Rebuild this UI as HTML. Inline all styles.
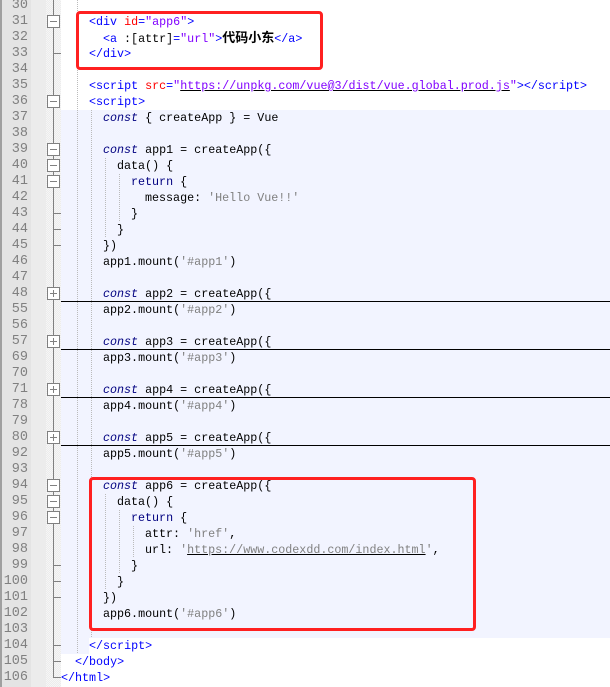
<!DOCTYPE html>
<html><head><meta charset="utf-8"><style>
body{margin:0;width:610px;height:687px;overflow:hidden;background:#fff;position:relative;font-family:"Liberation Mono","Courier New",monospace;font-size:11.7px}
.g0{position:absolute;left:0;top:0;width:2px;height:687px;background:#a0a0a0}
.g1{position:absolute;left:2px;top:0;width:29px;height:687px;background:#e4e4e4}
.g2{position:absolute;left:31px;top:0;width:15px;height:687px;background:#ececec}
.g3{position:absolute;left:46px;top:0;width:15px;height:687px;background-color:#f6f6f6;background-image:linear-gradient(45deg,#ececec 25%,transparent 25%,transparent 75%,#ececec 75%),linear-gradient(45deg,#ececec 25%,transparent 25%,transparent 75%,#ececec 75%);background-size:2px 2px;background-position:0 0,1px 1px}
.n{position:absolute;left:0;width:28px;text-align:right;color:#808080;height:16px;line-height:16px;font-size:13.5px;font-family:"Liberation Mono",monospace}
.r{position:absolute;height:16px;line-height:16px;white-space:pre;color:#000}
.vl{position:absolute;left:53px;top:0;width:1px;height:678px;background:#808080}
.fb{position:absolute;left:47px;width:13px;height:13px;border:1px solid #808080;background:#fff;box-sizing:border-box}
.fb:before{content:"";position:absolute;left:2px;top:5px;width:7px;height:1px;background:#808080}
.fb.p:after{content:"";position:absolute;left:5px;top:2px;width:1px;height:7px;background:#808080}
.tk{position:absolute;left:53px;width:8px;height:1px;background:#808080}
.hl{position:absolute;left:61px;width:549px;height:1px;background:#000}
.blue{position:absolute;background:#f2f4ff}
.t{color:#0000ff}.a{color:#ff0000}.v{color:#8000ff}.k{color:#000080;font-style:italic}.kb{color:#000080}.s{color:#808080}
.u{text-decoration:underline;text-decoration-color:#000}
.box{position:absolute;border:3px solid #ff2020;border-radius:4px;box-sizing:border-box}
.cj{font-family:"Liberation Sans","Noto Sans CJK SC",sans-serif;font-weight:bold;font-size:13px}
.dg{position:absolute;width:1px;background-image:linear-gradient(#bbb 50%,transparent 50%);background-size:1px 2px}
</style></head><body>
<div class="g0"></div><div class="g1"></div><div class="g2"></div><div class="g3"></div>
<div class="blue" style="left:61px;top:110px;width:549px;height:528px"></div>
<div class="blue" style="left:61px;top:638px;width:28px;height:16px"></div>
<div class="dg" style="left:77px;top:0;height:654px"></div>
<div class="dg" style="left:91px;top:110px;height:528px"></div>
<div class="dg" style="left:105px;top:158px;height:80px"></div>
<div class="dg" style="left:119px;top:174px;height:48px"></div>
<div class="dg" style="left:105px;top:494px;height:96px"></div>
<div class="dg" style="left:119px;top:510px;height:64px"></div>
<div class="dg" style="left:133px;top:526px;height:32px"></div>
<div class="vl"></div>
<div class="n" style="top:-2px">30</div><div class="n" style="top:14px">31</div><div class="n" style="top:30px">32</div><div class="n" style="top:46px">33</div><div class="n" style="top:62px">34</div><div class="n" style="top:78px">35</div><div class="n" style="top:94px">36</div><div class="n" style="top:110px">37</div><div class="n" style="top:126px">38</div><div class="n" style="top:142px">39</div><div class="n" style="top:158px">40</div><div class="n" style="top:174px">41</div><div class="n" style="top:190px">42</div><div class="n" style="top:206px">43</div><div class="n" style="top:222px">44</div><div class="n" style="top:238px">45</div><div class="n" style="top:254px">46</div><div class="n" style="top:270px">47</div><div class="n" style="top:286px">48</div><div class="n" style="top:302px">55</div><div class="n" style="top:318px">56</div><div class="n" style="top:334px">57</div><div class="n" style="top:350px">69</div><div class="n" style="top:366px">70</div><div class="n" style="top:382px">71</div><div class="n" style="top:398px">78</div><div class="n" style="top:414px">79</div><div class="n" style="top:430px">80</div><div class="n" style="top:446px">92</div><div class="n" style="top:462px">93</div><div class="n" style="top:478px">94</div><div class="n" style="top:494px">95</div><div class="n" style="top:510px">96</div><div class="n" style="top:526px">97</div><div class="n" style="top:542px">98</div><div class="n" style="top:558px">99</div><div class="n" style="top:574px">100</div><div class="n" style="top:590px">101</div><div class="n" style="top:606px">102</div><div class="n" style="top:622px">103</div><div class="n" style="top:638px">104</div><div class="n" style="top:654px">105</div><div class="n" style="top:670px">106</div>
<div class="fb" style="top:15px"></div><div class="fb" style="top:95px"></div><div class="fb" style="top:143px"></div><div class="fb" style="top:159px"></div><div class="fb" style="top:175px"></div>
<div class="fb p" style="top:287px"></div><div class="fb p" style="top:335px"></div><div class="fb p" style="top:383px"></div><div class="fb p" style="top:431px"></div>
<div class="fb" style="top:479px"></div><div class="fb" style="top:495px"></div><div class="fb" style="top:511px"></div>
<div class="tk" style="top:53px"></div><div class="tk" style="top:213px"></div><div class="tk" style="top:229px"></div><div class="tk" style="top:245px"></div><div class="tk" style="top:565px"></div><div class="tk" style="top:581px"></div><div class="tk" style="top:597px"></div><div class="tk" style="top:645px"></div><div class="tk" style="top:661px"></div><div class="tk" style="top:677px"></div>
<div class="hl" style="top:301px"></div><div class="hl" style="top:349px"></div><div class="hl" style="top:397px"></div><div class="hl" style="top:445px"></div>
<div class="r" style="left:89px;top:14px"><span class="t">&lt;div </span><span class="a">id</span><span class="t">=</span><span class="v">"app6"</span><span class="t">&gt;</span></div>
<div class="r" style="left:103px;top:30px"><span class="t">&lt;a </span>:[attr]<span class="t">=</span><span class="v">"url"</span><span class="t">&gt;</span><span class="cj">代码小东</span><span class="t">&lt;/a&gt;</span></div>
<div class="r" style="left:89px;top:46px"><span class="t">&lt;/div&gt;</span></div>
<div class="r" style="left:89px;top:78px"><span class="t">&lt;script </span><span class="a">src</span><span class="t">=</span><span class="v">"<span class="u">https://unpkg.com/vue@3/dist/vue.global.prod.js</span>"</span><span class="t">&gt;&lt;/script&gt;</span></div>
<div class="r" style="left:89px;top:94px"><span class="t">&lt;script&gt;</span></div>
<div class="r" style="left:103px;top:110px"><span class="k">const</span> { createApp } = Vue</div>
<div class="r" style="left:103px;top:142px"><span class="k">const</span> app1 = createApp({</div>
<div class="r" style="left:117px;top:158px">data() {</div>
<div class="r" style="left:131px;top:174px"><span class="kb">return</span> {</div>
<div class="r" style="left:145px;top:190px">message: <span class="s">'Hello Vue!!'</span></div>
<div class="r" style="left:131px;top:206px">}</div>
<div class="r" style="left:117px;top:222px">}</div>
<div class="r" style="left:103px;top:238px">})</div>
<div class="r" style="left:103px;top:254px">app1.mount(<span class="s">'#app1'</span>)</div>
<div class="r" style="left:103px;top:286px"><span class="k">const</span> app2 = createApp({</div>
<div class="r" style="left:103px;top:302px">app2.mount(<span class="s">'#app2'</span>)</div>
<div class="r" style="left:103px;top:334px"><span class="k">const</span> app3 = createApp({</div>
<div class="r" style="left:103px;top:350px">app3.mount(<span class="s">'#app3'</span>)</div>
<div class="r" style="left:103px;top:382px"><span class="k">const</span> app4 = createApp({</div>
<div class="r" style="left:103px;top:398px">app4.mount(<span class="s">'#app4'</span>)</div>
<div class="r" style="left:103px;top:430px"><span class="k">const</span> app5 = createApp({</div>
<div class="r" style="left:103px;top:446px">app5.mount(<span class="s">'#app5'</span>)</div>
<div class="r" style="left:103px;top:478px"><span class="k">const</span> app6 = createApp({</div>
<div class="r" style="left:117px;top:494px">data() {</div>
<div class="r" style="left:131px;top:510px"><span class="kb">return</span> {</div>
<div class="r" style="left:145px;top:526px">attr: <span class="s">'href'</span>,</div>
<div class="r" style="left:145px;top:542px">url: <span class="s">'<span class="u">https://www.codexdd.com/index.html</span>'</span>,</div>
<div class="r" style="left:131px;top:558px">}</div>
<div class="r" style="left:117px;top:574px">}</div>
<div class="r" style="left:103px;top:590px">})</div>
<div class="r" style="left:103px;top:606px">app6.mount(<span class="s">'#app6'</span>)</div>
<div class="r" style="left:89px;top:638px"><span class="t">&lt;/script&gt;</span></div>
<div class="r" style="left:75px;top:654px"><span class="t">&lt;/body&gt;</span></div>
<div class="r" style="left:61px;top:670px"><span class="t">&lt;/html&gt;</span></div>
<div class="box" style="left:76px;top:11px;width:247px;height:59px"></div>
<div class="box" style="left:89px;top:477px;width:387px;height:154px"></div>
</body></html>
